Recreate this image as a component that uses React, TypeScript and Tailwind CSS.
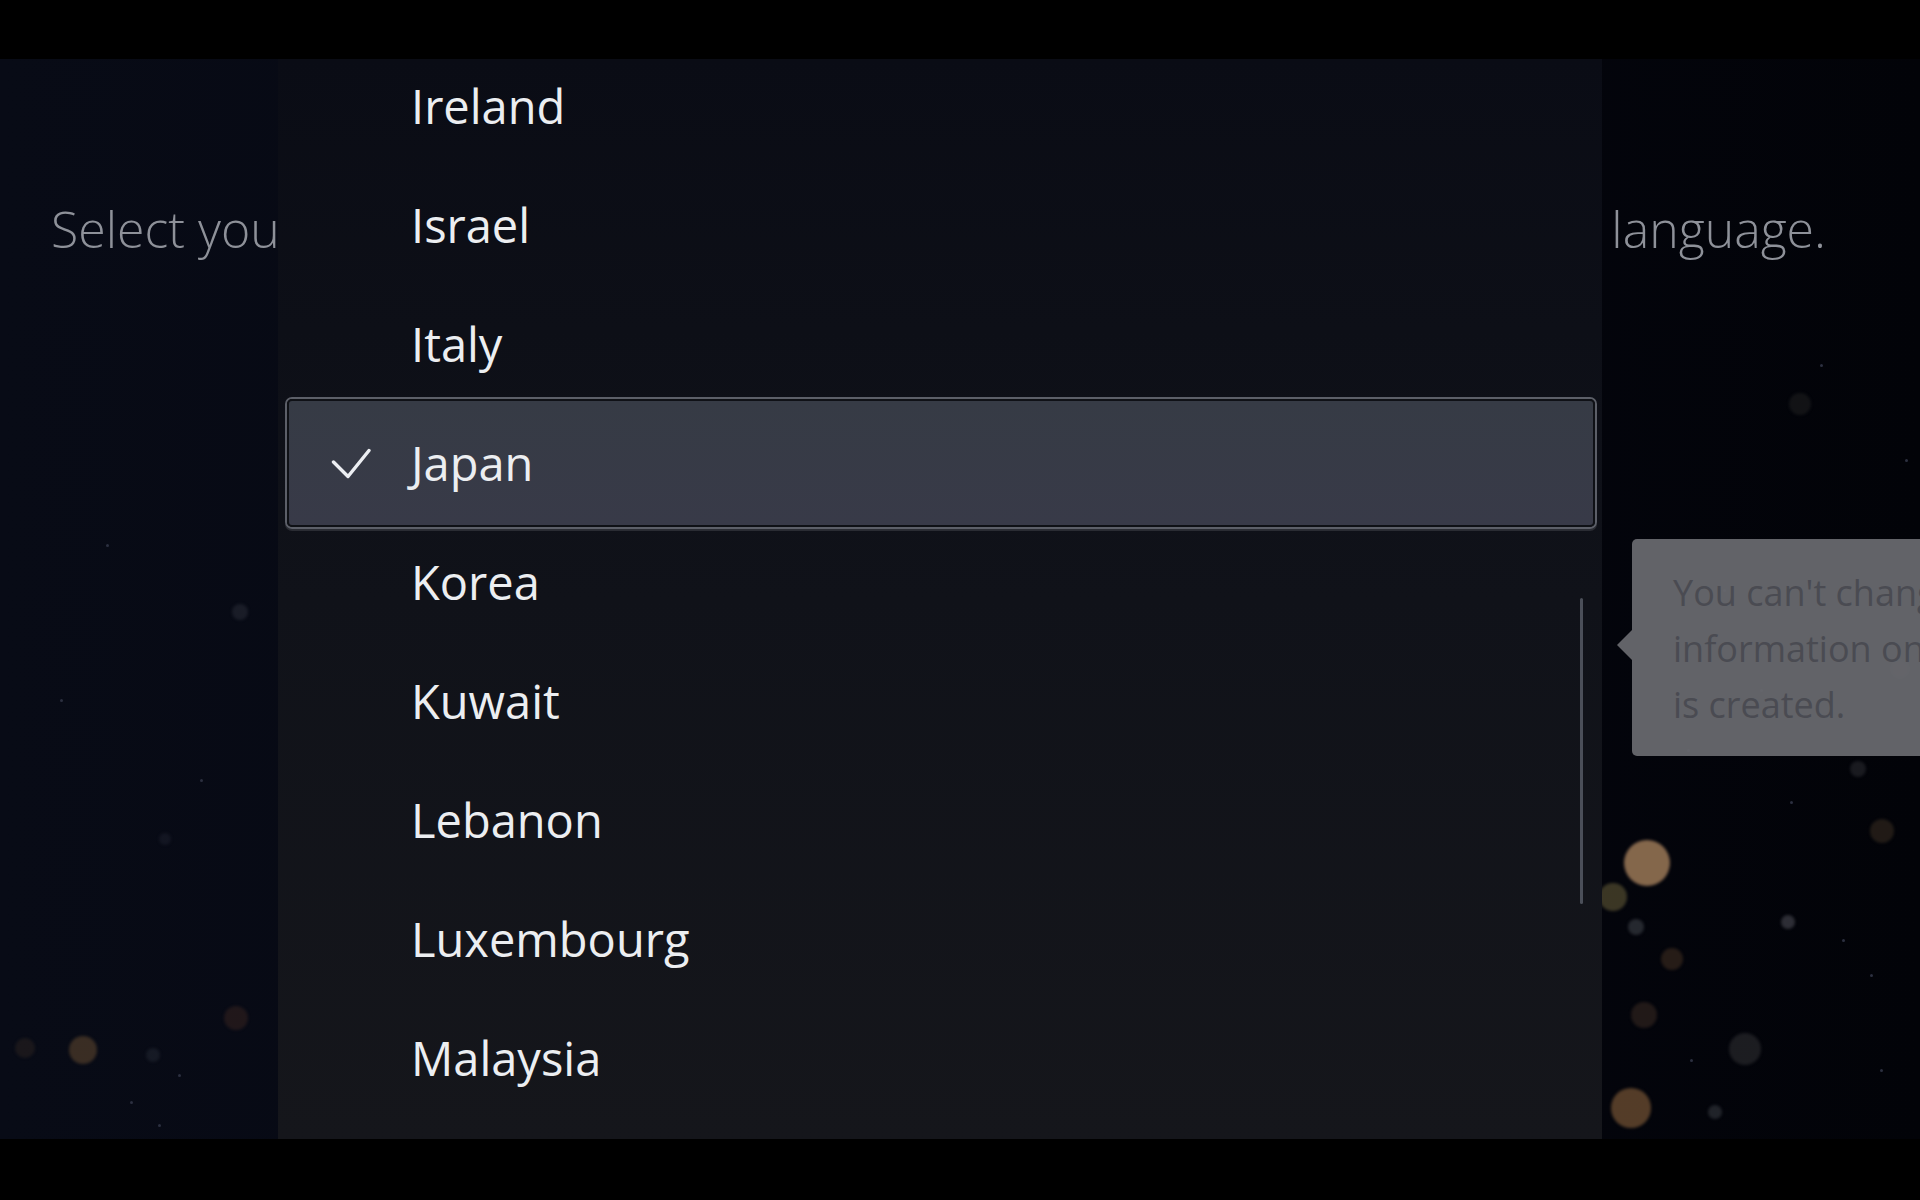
import * as React from "react";

// Country picker dropdown over the initial-setup screen.

const COUNTRIES = [
  "Ireland",
  "Israel",
  "Italy",
  "Japan",
  "Korea",
  "Kuwait",
  "Lebanon",
  "Luxembourg",
  "Malaysia",
];

const SELECTED = "Japan";

// decorative bokeh dots in the background, main-area coordinates
const BOKEH: { x: number; y: number; r: number; c: string }[] = [
  { x: 1647, y: 804, r: 23, c: "rgba(176,136,98,0.75)" },
  { x: 1613, y: 838, r: 14, c: "rgba(105,96,58,0.55)" },
  { x: 1636, y: 868, r: 8, c: "rgba(80,84,90,0.45)" },
  { x: 1631, y: 1049, r: 20, c: "rgba(138,98,60,0.6)" },
  { x: 1745, y: 990, r: 16, c: "rgba(60,60,62,0.45)" },
  { x: 1644, y: 956, r: 13, c: "rgba(70,52,40,0.45)" },
  { x: 1672, y: 900, r: 11, c: "rgba(92,66,42,0.4)" },
  { x: 1788, y: 863, r: 7, c: "rgba(110,110,120,0.4)" },
  { x: 1715, y: 1053, r: 7, c: "rgba(90,95,100,0.35)" },
  { x: 1882, y: 772, r: 12, c: "rgba(92,72,50,0.35)" },
  { x: 1858, y: 710, r: 8, c: "rgba(80,80,86,0.3)" },
  { x: 1800, y: 345, r: 11, c: "rgba(50,48,46,0.35)" },
  { x: 1900, y: 610, r: 10, c: "rgba(110,92,70,0.35)" },
  { x: 83, y: 991, r: 14, c: "rgba(108,80,50,0.5)" },
  { x: 236, y: 959, r: 12, c: "rgba(80,48,38,0.35)" },
  { x: 25, y: 989, r: 10, c: "rgba(70,52,40,0.3)" },
  { x: 153, y: 996, r: 7, c: "rgba(50,54,66,0.35)" },
  { x: 240, y: 553, r: 8, c: "rgba(60,64,74,0.35)" },
  { x: 165, y: 780, r: 6, c: "rgba(40,44,56,0.35)" },
];

const STARS: [number, number][] = [
  [178, 1015], [158, 1065], [130, 1042], [200, 720], [106, 485], [1687, 690],
  [1790, 742], [1842, 880], [1870, 915], [1760, 630], [1905, 400], [1820, 305],
  [1723, 530], [1690, 1000], [60, 640], [1880, 1010],
];

function Check() {
  return (
    <svg width="40" height="31" viewBox="0 0 40 31" fill="none" aria-hidden>
      <polyline
        points="2.5,14 17,28.5 38,2.5"
        stroke="#eceef2"
        strokeWidth="3.4"
        strokeLinecap="round"
        strokeLinejoin="round"
      />
    </svg>
  );
}

function Row({ name }: { name: string }) {
  const selected = name === SELECTED;
  return (
    <li className="relative flex h-[119px] shrink-0 items-center">
      {selected && (
        <div className="absolute -top-[7px] -bottom-[6px] left-[7px] right-[5px] rounded-[7px] border-2 border-[#5c5f68] shadow-[0_2px_0_#2a2c33]">
          <div className="h-full w-full rounded-[5px] border-2 border-[#0f1116] bg-linear-to-b from-[#363b45] to-[#383a48]" />
        </div>
      )}
      <div className="relative flex items-center gap-[40px] pl-[53px]">
        <span className="flex w-[40px] justify-center">{selected && <Check />}</span>
        <span className="text-[47px] leading-none text-[#eceef1]">{name}</span>
      </div>
    </li>
  );
}

export default function App() {
  return (
    <div
      className="flex h-[1200px] w-[1920px] flex-col overflow-hidden bg-black"
      style={{ fontFamily: '"Open Sans", "Noto Sans", sans-serif' }}
    >
      <div className="h-[59px] shrink-0 bg-black" />

      <main className="relative flex-1 overflow-hidden bg-linear-to-r from-[#080b16] via-[#060812] to-[#020308]">
        {BOKEH.map((b, i) => (
          <span
            key={i}
            className="absolute rounded-full blur-[1.5px]"
            style={{
              left: b.x - b.r,
              top: b.y - b.r,
              width: b.r * 2,
              height: b.r * 2,
              background: b.c,
            }}
          />
        ))}
        {STARS.map(([x, y], i) => (
          <span
            key={`s${i}`}
            className="absolute h-[3px] w-[3px] rounded-full bg-[#2c3040]"
            style={{ left: x, top: y }}
          />
        ))}

        {/* page heading (mostly hidden by the dropdown) */}
        <div className="relative flex justify-between pl-[51px] pr-[94px] pt-[137px] text-[50px] font-light leading-[66px] text-[#8e9199]">
          <span>Select your country or region, and then</span>
          <span>language.</span>
        </div>

        {/* dropdown list */}
        <div className="absolute bottom-0 left-[278px] top-0 w-[1324px] overflow-hidden bg-linear-to-b from-[#0a0c15] via-[#101219] to-[#15161b]">
          <ul className="-mt-[12px] flex flex-col">
            {COUNTRIES.map((c) => (
              <Row key={c} name={c} />
            ))}
          </ul>
          <div className="absolute left-[1302px] top-[539px] h-[306px] w-[3px] rounded-full bg-[#4b4f59]" />
        </div>

        {/* tooltip */}
        <div className="absolute left-[1632px] top-[480px] h-[217px] w-[420px] rounded-l-[5px] bg-[#67686e]/95">
          <span className="absolute -left-[15px] top-[91px] h-0 w-0 border-y-[15px] border-r-[15px] border-y-transparent border-r-[#67686e]/95" />
          <p className="whitespace-nowrap pl-[41px] pt-[26px] text-[36px] leading-[56px] text-[#4a4b52]">
            You can't change this
            <br />
            information once the user
            <br />
            is created.
          </p>
        </div>
      </main>

      <div className="h-[61px] shrink-0 bg-black" />
    </div>
  );
}
